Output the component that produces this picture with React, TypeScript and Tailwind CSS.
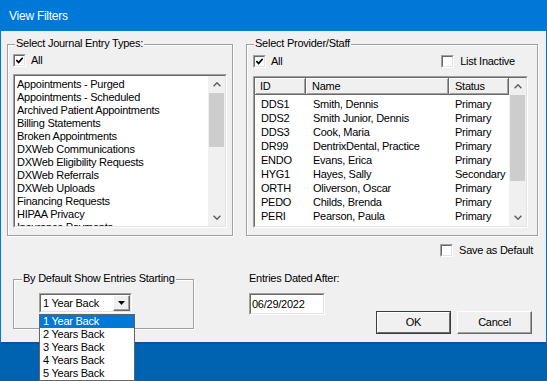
import React from 'react';

const journalTypes = [
  'Appointments - Purged',
  'Appointments - Scheduled',
  'Archived Patient Appointments',
  'Billing Statements',
  'Broken Appointments',
  'DXWeb Communications',
  'DXWeb Eligibility Requests',
  'DXWeb Referrals',
  'DXWeb Uploads',
  'Financing Requests',
  'HIPAA Privacy',
  'Insurance Payments'
];

const providers = [
  { id: 'DDS1', name: 'Smith, Dennis', status: 'Primary' },
  { id: 'DDS2', name: 'Smith Junior, Dennis', status: 'Primary' },
  { id: 'DDS3', name: 'Cook, Maria', status: 'Primary' },
  { id: 'DR99', name: 'DentrixDental, Practice', status: 'Primary' },
  { id: 'ENDO', name: 'Evans, Erica', status: 'Primary' },
  { id: 'HYG1', name: 'Hayes, Sally', status: 'Secondary' },
  { id: 'ORTH', name: 'Oliverson, Oscar', status: 'Primary' },
  { id: 'PEDO', name: 'Childs, Brenda', status: 'Primary' },
  { id: 'PERI', name: 'Pearson, Paula', status: 'Primary' },
  { id: 'SURG', name: 'Surgeon, Sam', status: 'Primary' }
];

const yearOptions = ['1 Year Back', '2 Years Back', '3 Years Back', '4 Years Back', '5 Years Back'];

const Check: React.FC<{ checked?: boolean }> = ({ checked }) => (
  <span className="block w-[13px] h-[13px] shrink-0 border border-t-[#a0a0a0] border-l-[#a0a0a0] border-r-white border-b-white">
    <span className="flex w-full h-full items-center justify-center bg-white border border-t-[#696969] border-l-[#696969] border-r-[#e3e3e3] border-b-[#e3e3e3]">
      {checked && (
        <svg width="7" height="7" viewBox="0 0 7 7">
          <path d="M0.3 3 L2.6 5.4 L6.7 0.8" stroke="#000" strokeWidth="1.7" fill="none" />
        </svg>
      )}
    </span>
  </span>
);

const Chevron: React.FC<{ down?: boolean }> = ({ down }) => (
  <svg width="8" height="5" viewBox="0 0 8 5">
    <path d={down ? 'M0.6 0.8 L4 4.2 L7.4 0.8' : 'M0.6 4.2 L4 0.8 L7.4 4.2'} stroke="#606060" strokeWidth="1.5" fill="none" />
  </svg>
);

const ScrollBar: React.FC<{ thumb: string }> = ({ thumb }) => (
  <div className="w-[17px] shrink-0 flex flex-col bg-[#f0f0f0]">
    <div className="h-[17px] flex items-center justify-center">
      <Chevron />
    </div>
    <div className={`mx-[1px] bg-[#cdcdcd] ${thumb}`} />
    <div className="flex-1" />
    <div className="h-[17px] flex items-center justify-center">
      <Chevron down />
    </div>
  </div>
);

const GroupBox: React.FC<{ label: string; labelLeft: string; className: string; children?: React.ReactNode }> = ({
  label,
  labelLeft,
  className,
  children
}) => (
  <div className={`relative border border-[#a0a0a0] shadow-[1px_1px_0_#fff,inset_1px_1px_0_#fff] ${className}`}>
    <span className={`absolute -top-[8px] ${labelLeft} bg-[#f0f0f0] px-[1px] leading-[13px] whitespace-nowrap`}>{label}</span>
    {children}
  </div>
);

const headerCell = 'h-full flex items-center border-r border-b border-r-[#696969] border-b-[#696969] shadow-[inset_1px_1px_0_#fff,inset_-1px_-1px_0_#a0a0a0]';

export default function App() {
  return (
    <div className="w-[547px] h-[381px] bg-[#0063b1] relative overflow-hidden font-['Liberation_Sans',Arial,sans-serif] text-[11px] tracking-[-0.25px] text-black">
      <div className="h-[344px] flex flex-col border-x border-[#0078d7] border-b-2 border-b-[#0556a0] bg-[#f0f0f0]">
        <div className="h-[31px] shrink-0 bg-[#0078d7] flex items-center pl-[8px] text-[12px] text-white">View Filters</div>

        <div className="flex flex-col pl-[6px] pr-[8px]">
          {/* top groups */}
          <div className="mt-[13px] flex gap-[13px] h-[192px]">
            <GroupBox label="Select Journal Entry Types:" labelLeft="left-[7px]" className="w-[226px] h-full">
              <div className="flex items-center gap-[5px] ml-[5px] mt-[9px] h-[13px]">
                <Check checked />
                <span>All</span>
              </div>
              <div className="ml-[5px] mt-[7px] w-[214px] h-[154px] border border-t-[#a0a0a0] border-l-[#a0a0a0] border-r-white border-b-white">
                <div className="w-full h-full flex bg-white border border-t-[#696969] border-l-[#696969] border-r-[#e3e3e3] border-b-[#e3e3e3]">
                  <div className="flex-1 overflow-hidden pl-[2px] pt-[2px]">
                    {journalTypes.map((t) => (
                      <div key={t} className="h-[13px] leading-[13px] whitespace-nowrap">
                        {t}
                      </div>
                    ))}
                  </div>
                  <ScrollBar thumb="h-[54px]" />
                </div>
              </div>
            </GroupBox>

            <GroupBox label="Select Provider/Staff" labelLeft="left-[7px]" className="flex-1 h-full">
              <div className="flex items-center ml-[6px] mr-[22px] mt-[10px] h-[13px]">
                <div className="flex items-center gap-[5px]">
                  <Check checked />
                  <span>All</span>
                </div>
                <div className="flex items-center gap-[6px] ml-auto">
                  <Check />
                  <span>List Inactive</span>
                </div>
              </div>
              <div className="ml-[6px] mt-[8px] w-[275px] h-[152px] border border-t-[#a0a0a0] border-l-[#a0a0a0] border-r-white border-b-white">
                <div className="w-full h-full flex bg-white border border-t-[#696969] border-l-[#696969] border-r-[#e3e3e3] border-b-[#e3e3e3]">
                  <div className="flex-1 flex flex-col overflow-hidden">
                    <div className="h-[17px] shrink-0 flex bg-[#f0f0f0]">
                      <div className={`${headerCell} w-[51px] pl-[5px]`}>ID</div>
                      <div className={`${headerCell} w-[143px] pl-[6px]`}>Name</div>
                      <div className={`${headerCell} flex-1 pl-[6px]`}>Status</div>
                    </div>
                    <div className="pt-[2px] overflow-hidden">
                      {providers.map((p) => (
                        <div key={p.id} className="h-[14px] leading-[14px] flex whitespace-nowrap">
                          <span className="w-[51px] pl-[6px]">{p.id}</span>
                          <span className="w-[143px] pl-[7px]">{p.name}</span>
                          <span className="pl-[6px]">{p.status}</span>
                        </div>
                      ))}
                    </div>
                  </div>
                  <ScrollBar thumb="h-[86px]" />
                </div>
              </div>
            </GroupBox>
          </div>

          {/* save as default */}
          <div className="mt-[8px] h-[13px] flex justify-end items-center gap-[6px] pr-[5px]">
            <Check />
            <span>Save as Default</span>
          </div>

          {/* bottom area */}
          <div className="mt-[15px] flex items-start">
            <GroupBox label="By Default Show Entries Starting" labelLeft="left-[8px]" className="shrink-0 ml-[6px] mt-[7px] w-[181px] h-[50px]">
              <div className="relative ml-[25px] mt-[13px] w-[93px] h-[20px]">
                <div className="w-full h-full border border-t-[#a0a0a0] border-l-[#a0a0a0] border-r-white border-b-white">
                  <div className="w-full h-full flex items-center bg-white border border-t-[#696969] border-l-[#696969] border-r-[#e3e3e3] border-b-[#e3e3e3]">
                    <span className="flex-1 pl-[2px] whitespace-nowrap">1 Year Back</span>
                    <div className="w-[17px] h-full flex items-center justify-center bg-[#f0f0f0] border border-t-white border-l-white border-r-[#696969] border-b-[#696969] shadow-[inset_-1px_-1px_0_#a0a0a0]">
                      <svg width="7" height="4" viewBox="0 0 7 4">
                        <polygon points="0,0 7,0 3.5,4" fill="#000" />
                      </svg>
                    </div>
                  </div>
                </div>
                <div className="absolute left-0 top-[21px] w-[96px] border border-[#646464] bg-white z-10">
                  {yearOptions.map((o, i) => (
                    <div
                      key={o}
                      className={`h-[13px] leading-[13px] pl-[3px] whitespace-nowrap ${i === 0 ? 'bg-[#0078d7] text-white' : ''}`}
                    >
                      {o}
                    </div>
                  ))}
                </div>
              </div>
            </GroupBox>

            <div className="ml-[55px] w-[76px] shrink-0 flex flex-col">
              <span className="leading-[13px] whitespace-nowrap">Entries Dated After:</span>
              <div className="mt-[8px] w-[76px] h-[22px] border border-t-[#a0a0a0] border-l-[#a0a0a0] border-r-white border-b-white">
                <div className="w-full h-full flex items-center pl-[1px] bg-white border border-t-[#696969] border-l-[#696969] border-r-[#e3e3e3] border-b-[#e3e3e3]">
                  06/29/2022
                </div>
              </div>
            </div>

            <div className="ml-[51px] mt-[39px] flex gap-[6px] shrink-0">
              <button className="w-[75px] h-[23px] border border-[#3c3c3c] bg-[#f0f0f0] p-0">
                <span className="flex w-full h-full items-center justify-center border border-t-white border-l-white border-r-[#696969] border-b-[#696969]">
                  OK
                </span>
              </button>
              <button className="w-[75px] h-[23px] bg-[#f0f0f0] p-0 border border-t-white border-l-white border-r-[#696969] border-b-[#696969]">
                <span className="flex w-full h-full items-center justify-center shadow-[inset_-1px_-1px_0_#a0a0a0]">Cancel</span>
              </button>
            </div>
          </div>
        </div>
      </div>
    </div>
  );
}
